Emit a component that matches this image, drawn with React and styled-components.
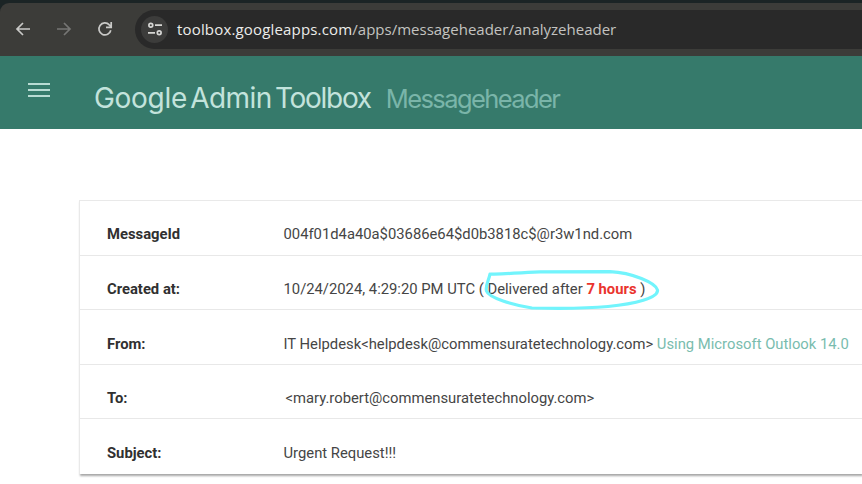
import React from "react";
import styled, { createGlobalStyle } from "styled-components";

const GlobalStyle = createGlobalStyle`
  * { box-sizing: border-box; }
  html, body { margin: 0; background: #fff; }
  body { overflow: hidden; }
`;

const Page = styled.div`
  width: 100%;
  height: 484px;
  overflow: hidden;
  background: #fff;
  font-family: Roboto, "Liberation Sans", sans-serif;
`;

const TabStrip = styled.div`
  height: 12px;
  margin-bottom: -9px;
  background: #1b2425;
`;

const BrowserBar = styled.div`
  position: relative;
  display: flex;
  align-items: center;
  height: 53px;
  padding: 0 0 1px 15px;
  background: #3c3c39;
  border-top-left-radius: 9px;
`;

const NavButton = styled.button`
  display: flex;
  width: 16px;
  height: 16px;
  padding: 0;
  margin-right: 25px;
  border: 0;
  background: none;
  color: ${(p) => (p.$dim ? "#767674" : "#c9c9c7")};
  svg { display: block; }
`;

const AddressBar = styled.div`
  display: flex;
  flex: 1;
  align-items: center;
  height: 39px;
  margin-left: -3px;
  padding-left: 6px;
  border-radius: 20px 0 0 20px;
  background: #292929;
`;

const SiteInfo = styled.div`
  display: flex;
  align-items: center;
  justify-content: center;
  width: 27px;
  height: 27px;
  margin-right: 9px;
  border-radius: 50%;
  background: #3c3c3b;
  color: #d6d6d4;
`;

const Url = styled.span`
  font: 15px/20px "Open Sans", "Noto Sans", sans-serif;
  white-space: nowrap;
  color: #c3c3c0;
`;

const Domain = styled.span`
  letter-spacing: 0.17px;
  color: #ececea;
`;

const Header = styled.header`
  display: flex;
  height: 73px;
  padding-left: 28px;
  background: #367a6b;
`;

const MenuButton = styled.button`
  display: flex;
  flex-direction: column;
  gap: 4px;
  width: 22px;
  margin: 27px 44px 0 0;
  padding: 0;
  border: 0;
  background: none;
`;

const MenuLine = styled.span`
  height: 2px;
  background: #b9dbd3;
`;

const Title = styled.h1`
  margin: 23px 0 0;
  font: 400 28px/38px Inter, sans-serif;
  letter-spacing: -4.5px;
  white-space: nowrap;
  color: #c3e3dc;
`;

const Word = styled.span`
  letter-spacing: ${(p) => p.$tracking}px;
`;

const Tool = styled.span`
  margin-left: 15px;
  font-size: 25.5px;
  letter-spacing: -1.6px;
  color: #7ab5a9;
`;

const Card = styled.section`
  margin: 71px 0 0 79px;
  border: 1px solid #e9e9e9;
  border-right: 0;
  border-bottom: 0;
  box-shadow: 1px 2px 2px rgba(0, 0, 0, 0.35);
`;

const Row = styled.div`
  position: relative;
  display: flex;
  height: 54.6px;
  padding: 13.45px 0 0 27px;
  border-bottom: 1px solid #e8e8e8;
  font-size: 14.8px;
  line-height: 40px;
  white-space: nowrap;
  color: #454545;
  &:last-child { border-bottom: 0; }
`;

const Label = styled.div`
  width: 176.5px;
  font-weight: 700;
  color: #303030;
`;

const Value = styled.div`
  padding-left: ${(p) => p.$indent || 0}px;
`;

const Delay = styled.strong`
  font-weight: 700;
  color: #ea342d;
`;

const Mailer = styled.span`
  color: #79bcae;
`;

const Circle = styled.svg`
  position: absolute;
  left: 400px;
  top: 9px;
  overflow: visible;
`;

const BackIcon = () => (
  <svg width="16" height="16" viewBox="0 0 16 16" fill="none" stroke="currentColor" strokeWidth="1.7">
    <path d="M15 8H2.5M8 2L2 8l6 6" />
  </svg>
);

const ForwardIcon = () => (
  <svg width="16" height="16" viewBox="0 0 16 16" fill="none" stroke="currentColor" strokeWidth="1.7">
    <path d="M1 8h12.5M8 2l6 6-6 6" />
  </svg>
);

const ReloadIcon = () => (
  <svg width="16" height="16" viewBox="0 0 16 16" fill="none" stroke="currentColor" strokeWidth="1.7">
    <path d="M13.8 9.2A6 6 0 1 1 12.3 3.8L14 5.5M14.2 1v5.3H9" />
  </svg>
);

const TuneIcon = () => (
  <svg width="16" height="14" viewBox="0 0 16 14" fill="none" stroke="currentColor" strokeWidth="1.7">
    <circle cx="3.8" cy="3.2" r="1.9" />
    <path d="M8 3.2h7M1 10.8h7" />
    <circle cx="12.2" cy="10.8" r="1.9" />
  </svg>
);

export default function App() {
  return (
    <Page>
      <GlobalStyle />
      <TabStrip />
      <BrowserBar>
        <NavButton aria-label="Back"><BackIcon /></NavButton>
        <NavButton aria-label="Forward" $dim><ForwardIcon /></NavButton>
        <NavButton aria-label="Reload"><ReloadIcon /></NavButton>
        <AddressBar>
          <SiteInfo><TuneIcon /></SiteInfo>
          <Url><Domain>toolbox.googleapps.com</Domain>/apps/messageheader/analyzeheader</Url>
        </AddressBar>
      </BrowserBar>
      <Header>
        <MenuButton aria-label="Menu"><MenuLine /><MenuLine /><MenuLine /></MenuButton>
        <Title>
          <Word $tracking={-0.3}>Google</Word> <Word $tracking={-0.6}>Admin</Word> <Word $tracking={-1.3}>Toolbox</Word>
          <Tool>Messageheader</Tool>
        </Title>
      </Header>
      <Card>
        <Row>
          <Label>MessageId</Label>
          <Value>004f01d4a40a$03686e64$d0b3818c$@r3w1nd.com</Value>
        </Row>
        <Row>
          <Label>Created at:</Label>
          <Value>10/24/2024, 4:29:20 PM UTC ( Delivered after <Delay>7 hours</Delay> )</Value>
          <Circle width="180" height="42" viewBox="480 264 180 42" fill="none" stroke="#72f4fc" strokeWidth="3.2" strokeLinecap="round" strokeLinejoin="round">
            <path d="M491 273C505 273.5 516 271.5 540 270.8L610 270.6C632 271.5 656 282 657.5 289C658.5 297 635 303 608 305.5C582 308 555 307.5 532 307C513 304 489 297 486.5 290C485 285 489 279 490 273" />
          </Circle>
        </Row>
        <Row>
          <Label>From:</Label>
          <Value>IT Helpdesk&lt;helpdesk@commensuratetechnology.com&gt; <Mailer>Using Microsoft Outlook 14.0</Mailer></Value>
        </Row>
        <Row>
          <Label>To:</Label>
          <Value $indent={2}>&lt;mary.robert@commensuratetechnology.com&gt;</Value>
        </Row>
        <Row>
          <Label>Subject:</Label>
          <Value>Urgent Request!!!</Value>
        </Row>
      </Card>
    </Page>
  );
}
